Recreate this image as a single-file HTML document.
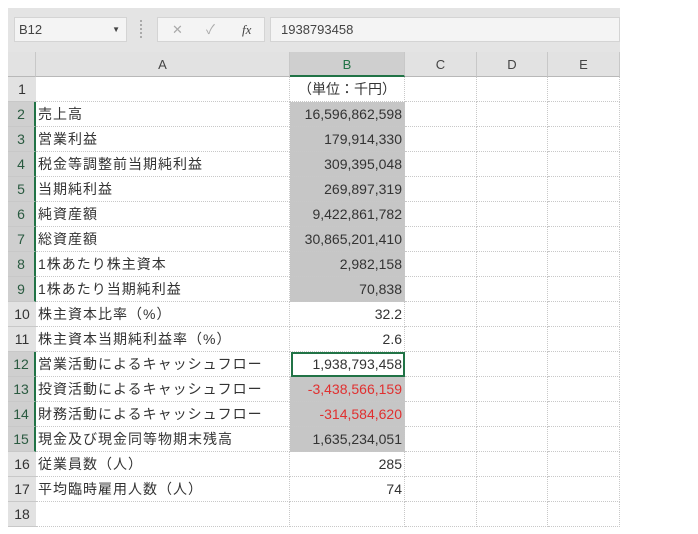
<!DOCTYPE html>
<html><head><meta charset="utf-8"><style>
body{margin:0;width:698px;height:534px;background:#fff;position:relative;overflow:hidden;font-family:"Liberation Sans","Noto Sans CJK JP",sans-serif;color:#333}
.a{position:absolute;box-sizing:border-box}
.top{left:8px;top:8px;width:612px;height:44px;background:#e4e4e4}
.box{background:#f4f4f4;border:1px solid #d4d4d4;height:25px;top:17px;font-size:13px;line-height:23px;color:#444}
.ch{top:52px;height:25px;background:#e2e2e2;border-right:1px solid #c8c8c8;border-bottom:1px solid #b8b8b8;text-align:center;font-size:13px;line-height:25px;color:#444}
.rh{left:8px;width:28px;height:25px;background:#e2e2e2;border-bottom:1px solid #c8c8c8;text-align:center;font-size:14px;line-height:25px;color:#333}
.rh.s{background:#cfcfcf;color:#2a5a40;border-right:2px solid #217346}
.c{height:25px;border-bottom:1px dotted #c8c8c8;border-right:1px dotted #c8c8c8;font-size:14px;line-height:25px;white-space:nowrap;padding:0 2px}
.r{text-align:right}
.g{background:#c6c6c6}
.red{color:#e03030}
.ls{letter-spacing:1px}
</style></head><body>
<div class="a top"></div>
<div class="a box" style="left:14px;width:113px;padding-left:4px">B12<span style="position:absolute;right:6px;font-size:8px">▼</span></div>
<div class="a" style="left:140px;top:20px;width:2px;height:18px;border-left:2px dotted #aaa"></div>
<div class="a box" style="left:157px;width:108px;color:#aaa;font-size:13px"><span style="position:absolute;left:14px">✕</span><span style="position:absolute;left:48px">✓</span><span style="position:absolute;left:84px;color:#444;font-style:italic;font-family:'Liberation Serif',serif">fx</span></div>
<div class="a box" style="left:270px;width:350px;padding-left:10px">1938793458</div>
<div class="a ch" style="left:8px;width:28px"></div>
<div class="a ch" style="left:36px;width:254px">A</div>
<div class="a ch" style="left:290px;width:115px;background:#cfcfcf;border-bottom:2px solid #217346;color:#217346">B</div>
<div class="a ch" style="left:405px;width:72px">C</div>
<div class="a ch" style="left:477px;width:71px">D</div>
<div class="a ch" style="left:548px;width:72px">E</div>
<div id="g"></div>
<script>
var rows=[["",'（単位：千円）',0],["売上高","16,596,862,598",1],["営業利益","179,914,330",1],["税金等調整前当期純利益","309,395,048",1],["当期純利益","269,897,319",1],["純資産額","9,422,861,782",1],["総資産額","30,865,201,410",1],["1株あたり株主資本","2,982,158",1],["1株あたり当期純利益","70,838",1],["株主資本比率（%）","32.2",0],["株主資本当期純利益率（%）","2.6",0],["営業活動によるキャッシュフロー","1,938,793,458",2],["投資活動によるキャッシュフロー","-3,438,566,159",3],["財務活動によるキャッシュフロー","-314,584,620",3],["現金及び現金同等物期末残高","1,635,234,051",1],["従業員数（人）","285",0],["平均臨時雇用人数（人）","74",0],["","",0]];
var h="";
rows.forEach(function(r,i){var y=77+i*25;var sel=(i>=1&&i<=8)||(i>=11&&i<=14);
h+='<div class="a rh'+(sel?' s':'')+'" style="top:'+y+'px">'+(i+1)+'</div>';
h+='<div class="a c ls" style="left:36px;width:254px;top:'+y+'px">'+r[0]+'</div>';
var cl="a c r"+(r[2]==1||r[2]==3?" g":"")+(r[2]==3?" red":"");
var st=i==0?"text-align:center;":"";
h+='<div class="'+cl+'" style="'+st+'left:290px;width:115px;top:'+y+'px">'+r[1]+'</div>';
if(r[2]==2)h+='<div class="a" style="left:291px;top:'+(y)+'px;width:114px;height:25px;border:2px solid #217346"></div>';
h+='<div class="a c" style="left:405px;width:72px;top:'+y+'px"></div><div class="a c" style="left:477px;width:71px;top:'+y+'px"></div><div class="a c" style="left:548px;width:72px;top:'+y+'px"></div>';});
document.getElementById("g").innerHTML=h;
</script>
</body></html>
